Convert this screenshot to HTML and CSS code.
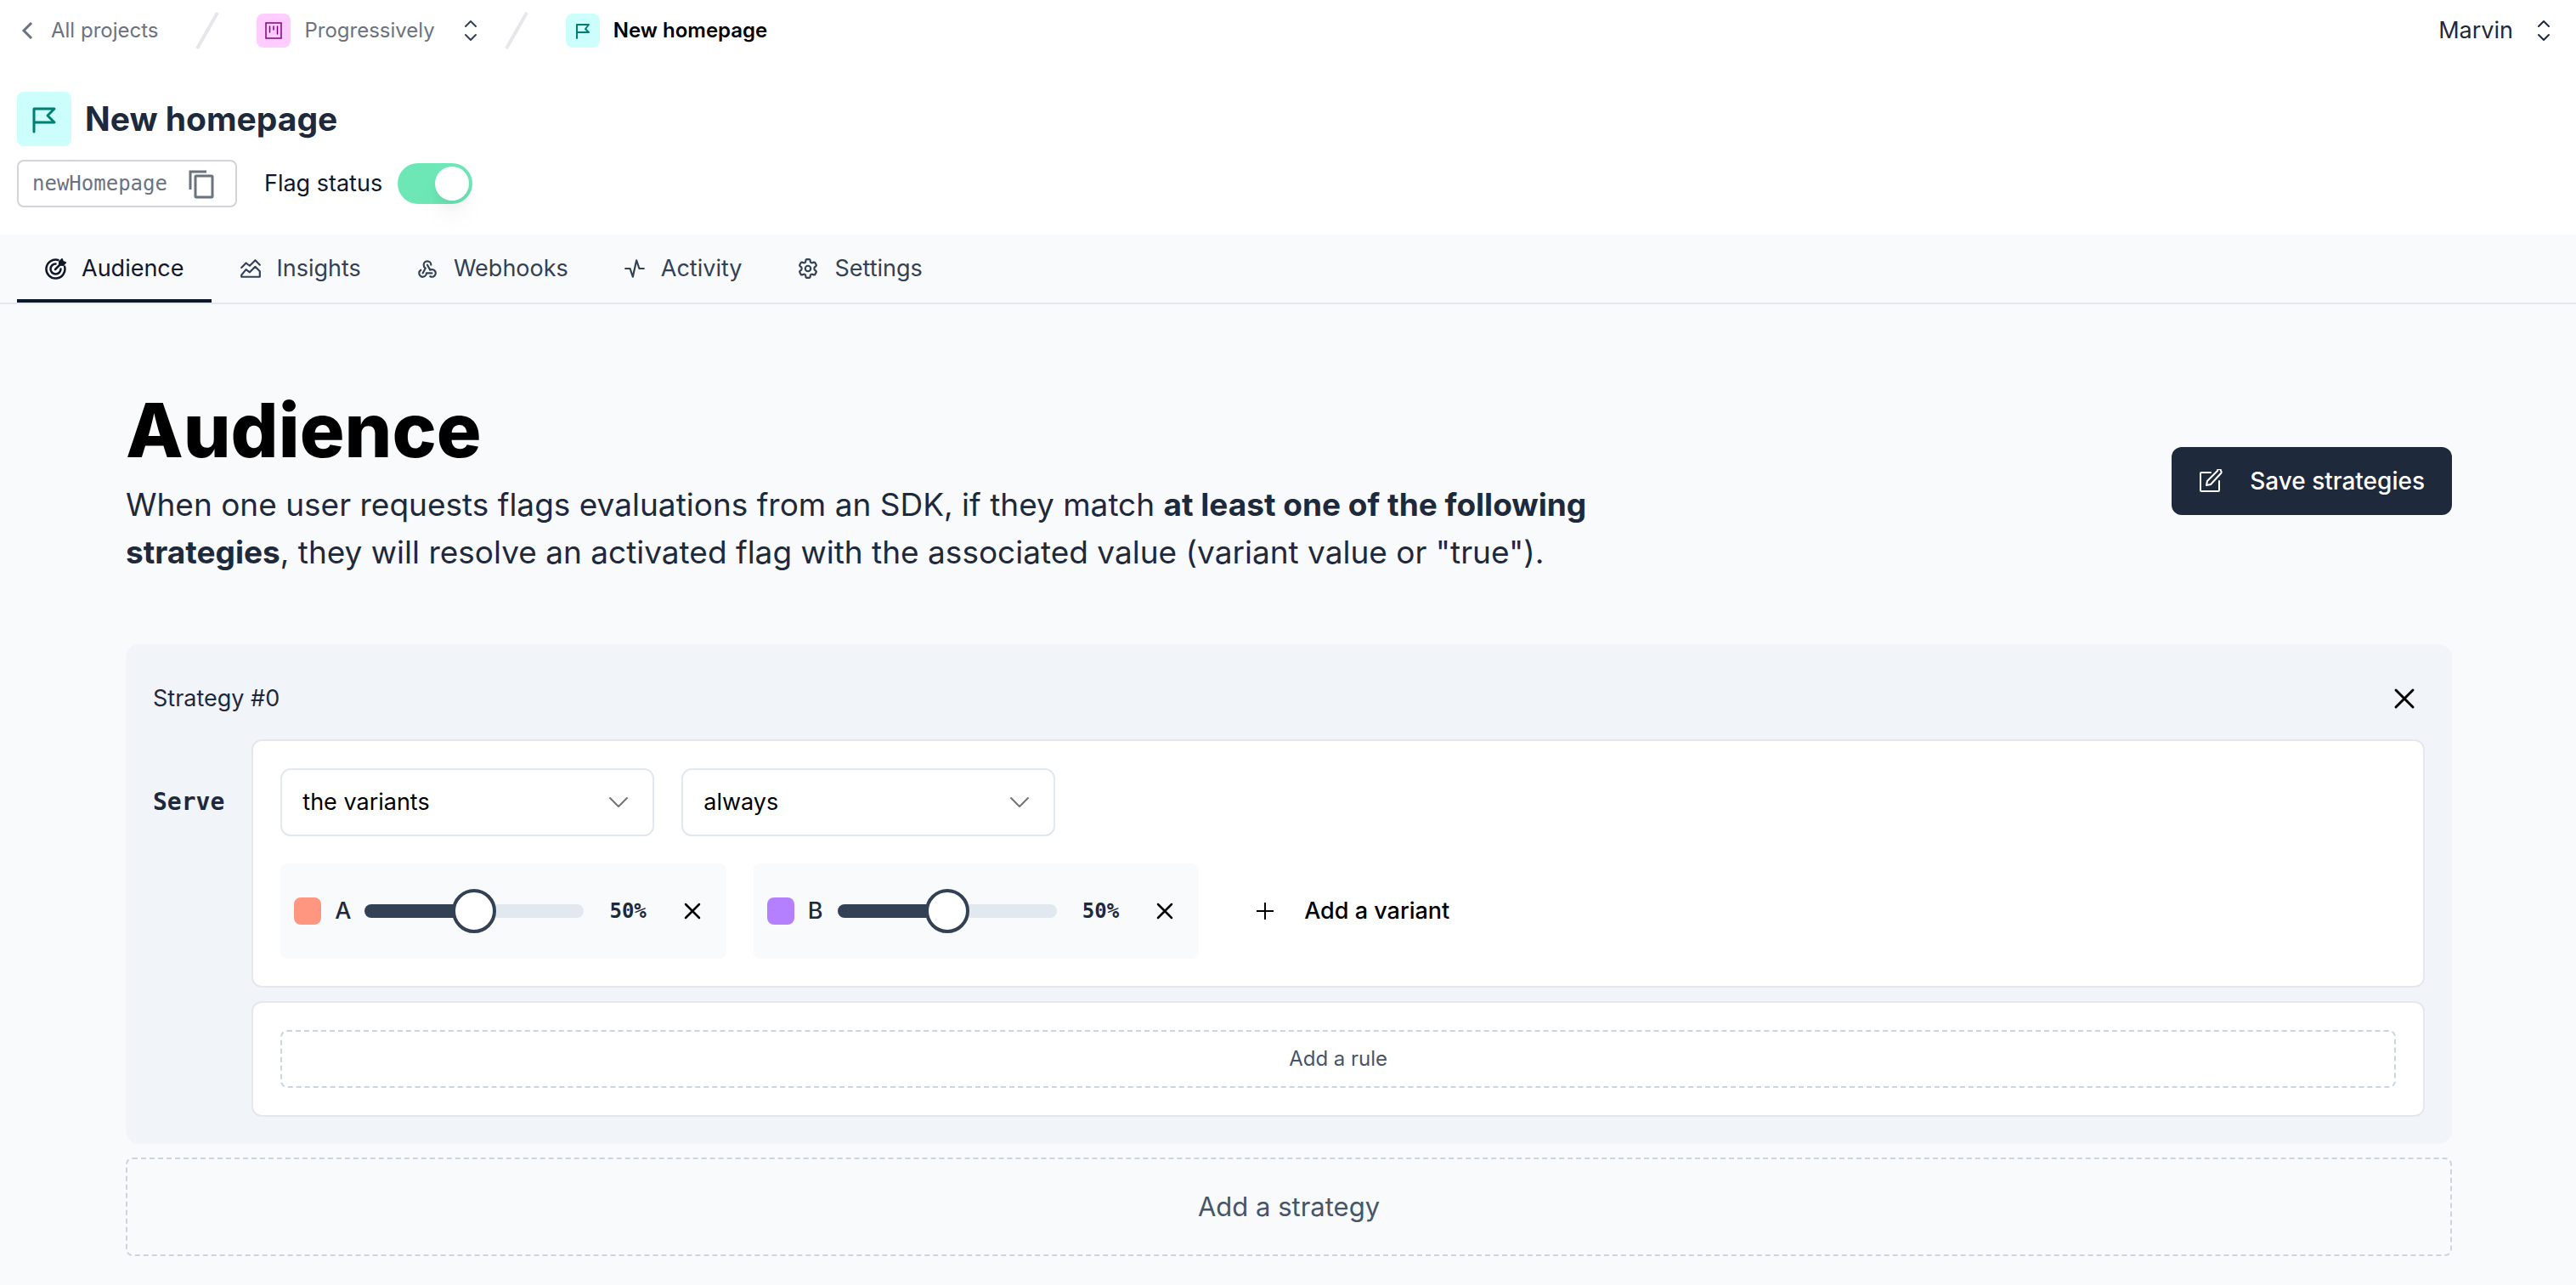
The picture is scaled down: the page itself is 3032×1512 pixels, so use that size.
FILE: index.html
```html
<!DOCTYPE html>
<html lang="en">
<head>
<meta charset="utf-8">
<meta name="viewport" content="width=device-width, initial-scale=1">
<title>Progressively | New homepage | Audience</title>
<link rel="stylesheet" href="styles.css">
</head>
<body>
<header class="topbar">
  <nav class="crumbs" aria-label="Breadcrumb">
    <a class="crumb crumb-back" href="#">
      <svg class="icon-20" viewBox="0 0 20 20" fill="none" stroke="currentColor" stroke-width="3" aria-hidden="true"><path d="M17 1 8 10l9 9"/></svg>
      All projects
    </a>
    <svg class="slash" viewBox="0 0 32 48" stroke="currentColor" stroke-width="4" aria-hidden="true"><path d="M4 45 28 3"/></svg>
    <div class="crumb-group">
      <a class="crumb" href="#">
        <span class="badge badge-pink">
          <svg class="icon-24" viewBox="0 0 24 24" fill="none" stroke="currentColor" aria-hidden="true"><rect x="3" y="3" width="18" height="18" stroke-width="1.500"/><path d="M7.500 7v7M12 7v4M16.500 7v9" stroke-width="1.500" stroke-linecap="round"/></svg>
        </span>
        Progressively
      </a>
      <button class="plain switcher" type="button" aria-label="Switch project">
        <svg class="icon-28" viewBox="0 0 28 28" fill="none" stroke="currentColor" stroke-width="2" stroke-linecap="round" stroke-linejoin="round" aria-hidden="true"><path d="m8 9 6-6 6 6M8 19l6 6 6-6"/></svg>
      </button>
    </div>
    <svg class="slash" viewBox="0 0 32 48" stroke="currentColor" stroke-width="4" aria-hidden="true"><path d="M4 45 28 3"/></svg>
    <a class="crumb crumb-current" href="#" aria-current="page">
      <span class="badge badge-teal">
        <svg class="icon-24" viewBox="0 0 24 24" fill="none" stroke="currentColor" stroke-width="2" stroke-linejoin="round" stroke-linecap="round" aria-hidden="true"><path d="M5 21V5h14l-4 5 4 4H5"/></svg>
      </span>
      New homepage
    </a>
  </nav>
  <button class="plain user" type="button">
    Marvin
    <svg class="icon-28" viewBox="0 0 28 28" fill="none" stroke="currentColor" stroke-width="2" stroke-linecap="round" stroke-linejoin="round" aria-hidden="true"><path d="m8 9 6-6 6 6M8 19l6 6 6-6"/></svg>
  </button>
</header>

<section class="flag-head">
  <div class="flag-title">
    <span class="badge badge-teal badge-large">
      <svg class="icon-40" viewBox="0 0 40 40" fill="none" stroke="currentColor" stroke-width="3" stroke-linejoin="round" stroke-linecap="round" aria-hidden="true"><path d="M8 35V8h24l-8 8 8 8H8"/></svg>
    </span>
    <h2>New homepage</h2>
  </div>
  <div class="flag-meta">
    <button class="flag-key" type="button">
      newHomepage
      <svg class="icon-36" viewBox="0 0 36 36" fill="none" stroke="currentColor" stroke-width="3" aria-hidden="true"><path d="M5 25V4h19"/><rect x="11" y="9" width="20" height="25" rx="1"/></svg>
    </button>
    <label class="status" for="flag-status">Flag status
      <input class="toggle" id="flag-status" type="checkbox" role="switch" checked>
    </label>
  </div>
</section>

<nav class="tabs" aria-label="Flag sections">
  <a class="tab tab-active" href="#" aria-current="page">
    <svg class="icon-26" viewBox="0 0 26 26" fill="none" stroke="currentColor" stroke-width="2.500" stroke-linecap="round" stroke-linejoin="round" aria-hidden="true"><path d="M16.500 3A11 11 0 1 0 24 10.500"/><path d="M13.500 7.500A6 6 0 1 0 19.500 13.500"/><path d="m13 14 6-6"/><path fill="currentColor" stroke-width="2" d="M18 8.500V5l3-3 1 3 3 1-3 3z"/></svg>
    Audience
  </a>
  <a class="tab" href="#">
    <svg class="icon-26" viewBox="0 0 24 24" fill="none" stroke="currentColor" stroke-width="2" stroke-linecap="round" stroke-linejoin="round" aria-hidden="true"><path d="m2 11 5-5 4 3 6-6 5 5"/><path d="M2 21v-2l5-6 4 3 6-6 5 5v6z"/></svg>
    Insights
  </a>
  <a class="tab" href="#">
    <svg class="icon-26" viewBox="0 0 24 24" fill="none" stroke="currentColor" stroke-width="2" stroke-linecap="round" stroke-linejoin="round" aria-hidden="true"><path d="M4.876 13.610A4 4 0 1 0 11 17h6"/><path d="M15.066 20.502A4 4 0 1 0 17 13c-.706 0-1.424.179-2 .5L12 8"/><path d="M16 8a4 4 0 1 0-8 0c0 1.506.77 2.818 2 3.500L7 17"/></svg>
    Webhooks
  </a>
  <a class="tab" href="#">
    <svg class="icon-26" viewBox="0 0 24 24" fill="none" stroke="currentColor" stroke-width="2" stroke-linecap="round" stroke-linejoin="round" aria-hidden="true"><path d="M2 12h5l3 9 4-18 3 9h5"/></svg>
    Activity
  </a>
  <a class="tab" href="#">
    <svg class="icon-26" viewBox="0 0 24 24" fill="none" stroke="currentColor" stroke-width="2" stroke-linecap="round" stroke-linejoin="round" aria-hidden="true"><path d="M9.594 2.940c.09-.542.56-.94 1.110-.94h2.593c.55 0 1.020.398 1.110.94l.213 1.781c.063.374.313.686.645.87.074.04.147.083.22.127.325.196.72.257 1.075.124l1.717-.656a1.125 1.125 0 0 1 1.370.49l1.296 2.247a1.125 1.125 0 0 1-.26 1.431l-1.403 1.127c-.293.241-.438.613-.43.992a7.723 7.723 0 0 1 0 1.055c-.008.378.137.75.43.991l1.404 1.127c.424.35.534.955.26 1.430l-1.298 2.247a1.125 1.125 0 0 1-1.369.491l-1.717-.656c-.355-.133-.75-.072-1.076.124a6.470 6.470 0 0 1-.22.128c-.331.183-.581.495-.644.869l-.213 1.781c-.09.543-.56.94-1.110.94h-2.594c-.55 0-1.019-.398-1.110-.94l-.213-1.781c-.062-.374-.312-.686-.644-.87a6.520 6.520 0 0 1-.22-.127c-.325-.196-.72-.257-1.076-.124l-1.717.656a1.125 1.125 0 0 1-1.369-.49l-1.297-2.247a1.125 1.125 0 0 1 .26-1.431l1.404-1.127c.292-.24.437-.613.43-.991a6.932 6.932 0 0 1 0-1.055c.007-.38-.138-.751-.43-.992l-1.404-1.127a1.125 1.125 0 0 1-.26-1.430l1.297-2.247a1.125 1.125 0 0 1 1.370-.491l1.716.656c.356.133.751.072 1.076-.124.072-.044.146-.086.22-.128.332-.183.582-.495.644-.869z"/><circle cx="12" cy="12" r="3"/></svg>
    Settings
  </a>
</nav>

<main class="content">
  <div class="hero">
    <div class="hero-text">
      <h1>Audience</h1>
      <p>When one user requests flags evaluations from an SDK, if they match <strong>at least one of the following strategies</strong>, they will resolve an activated flag with the associated value (variant value or "true").</p>
    </div>
    <button class="save" type="submit">
      <svg class="icon-28" viewBox="0 0 28 28" fill="none" stroke="currentColor" stroke-width="2" stroke-linecap="round" stroke-linejoin="round" aria-hidden="true"><path d="M14 4H3a1 1 0 0 0-1 1v20a1 1 0 0 0 1 1h20a1 1 0 0 0 1-1V14"/><path d="m9 19 1-5L22 2a2 2 0 0 1 4 0 2 2 0 0 1 0 3L14 18z"/></svg>
      Save strategies
    </button>
  </div>

  <section class="strategy">
    <div class="strategy-head">
      <h3>Strategy #0</h3>
      <button class="plain close" type="button" aria-label="Remove strategy">
        <svg class="icon-28" viewBox="0 0 28 28" fill="none" stroke="currentColor" stroke-width="3" stroke-linecap="round" aria-hidden="true"><path d="m4 4 20 20M24 4 4 24"/></svg>
      </button>
    </div>
    <div class="strategy-body">
      <span class="serve">Serve</span>
      <div class="panels">
        <div class="panel panel-serve">
          <div class="row">
            <div class="select">
              <select aria-label="Value to serve"><option>the variants</option><option>a boolean</option></select>
              <svg class="icon-28" viewBox="0 0 28 28" fill="none" stroke="currentColor" stroke-width="2" stroke-linecap="round" stroke-linejoin="round" aria-hidden="true"><path d="m4 9 10 10L24 9"/></svg>
            </div>
            <div class="select">
              <select aria-label="When to serve"><option>always</option><option>between dates</option></select>
              <svg class="icon-28" viewBox="0 0 28 28" fill="none" stroke="currentColor" stroke-width="2" stroke-linecap="round" stroke-linejoin="round" aria-hidden="true"><path d="m4 9 10 10L24 9"/></svg>
            </div>
          </div>
          <div class="row">
            <div class="variant">
              <span class="swatch swatch-coral"></span>
              <label for="variant-a">A</label>
              <input class="slider" id="variant-a" type="range" min="0" max="100" value="50" style="--value: 50%">
              <output for="variant-a">50%</output>
              <button class="plain remove" type="button" aria-label="Remove variant A">
                <svg class="icon-24" viewBox="0 0 24 24" fill="none" stroke="currentColor" stroke-width="2.500" stroke-linecap="round" aria-hidden="true"><path d="m4 4 16 16M20 4 4 20"/></svg>
              </button>
            </div>
            <div class="variant">
              <span class="swatch swatch-violet"></span>
              <label for="variant-b">B</label>
              <input class="slider" id="variant-b" type="range" min="0" max="100" value="50" style="--value: 50%">
              <output for="variant-b">50%</output>
              <button class="plain remove" type="button" aria-label="Remove variant B">
                <svg class="icon-24" viewBox="0 0 24 24" fill="none" stroke="currentColor" stroke-width="2.500" stroke-linecap="round" aria-hidden="true"><path d="m4 4 16 16M20 4 4 20"/></svg>
              </button>
            </div>
            <button class="plain add-variant" type="button">
              <svg class="icon-28" viewBox="0 0 28 28" fill="none" stroke="currentColor" stroke-width="2" aria-hidden="true"><path d="M14 4v20M4 14h20"/></svg>
              Add a variant
            </button>
          </div>
        </div>
        <div class="panel">
          <button class="dashed add-rule" type="button">Add a rule</button>
        </div>
      </div>
    </div>
  </section>
  <button class="dashed add-strategy" type="button">Add a strategy</button>
</main>
</body>
</html>
```
FILE: styles.css
```css
*,
*::before,
*::after {
  box-sizing: border-box;
}

body {
  margin: 0;
  background: #f9fafc;
  color: #1e293b;
  font-family: Inter, "Liberation Sans", sans-serif;
  font-size: 27px;
  line-height: 40px;
}

h1, h2, h3, p {
  margin: 0;
}

a {
  color: inherit;
  text-decoration: none;
}

button, select {
  font: inherit;
  color: inherit;
  cursor: pointer;
}

svg {
  display: block;
  flex: none;
}

.icon-20 { width: 20px; height: 20px; }
.icon-24 { width: 24px; height: 24px; }
.icon-26 { width: 26px; height: 26px; }
.icon-28 { width: 28px; height: 28px; }
.icon-36 { width: 36px; height: 36px; }
.icon-40 { width: 40px; height: 40px; }

.plain {
  padding: 0;
  border: 0;
  background: none;
}

/* Top bar */
.topbar {
  display: flex;
  align-items: center;
  justify-content: space-between;
  height: 72px;
  padding: 0 24px 0 20px;
  background: #fff;
}

.crumbs,
.crumb,
.crumb-group,
.user {
  display: flex;
  align-items: center;
}

.crumbs {
  gap: 24px;
  color: #6b7280;
  font-size: 24px;
}

.crumb {
  gap: 16px;
}

.crumb-back {
  gap: 20px;
  padding-right: 18px;
}

.crumb-group {
  gap: 28px;
}

.crumb-current {
  color: #000;
  font-weight: 600;
}

.slash {
  width: 32px;
  height: 48px;
  margin-right: 18px;
  color: #e5e7eb;
}

.switcher {
  color: #334155;
}

.user {
  gap: 22px;
}

.badge {
  display: grid;
  place-items: center;
  flex: none;
  width: 40px;
  height: 40px;
  border-radius: 8px;
}

.badge-large {
  width: 64px;
  height: 64px;
}

.badge-pink {
  background: #ffccff;
  color: #800080;
}

.badge-teal {
  background: #ccfffc;
  color: #008073;
}

/* Flag heading */
.flag-head {
  display: grid;
  gap: 16px;
  padding: 36px 20px 32px;
  background: #fff;
}

.flag-title,
.flag-meta,
.flag-key,
.status {
  display: flex;
  align-items: center;
}

.flag-title {
  gap: 16px;
}

.flag-title h2 {
  font-size: 39px;
  font-weight: 700;
  line-height: 48px;
}

.flag-meta {
  gap: 32px;
}

.flag-key {
  gap: 22px;
  height: 56px;
  padding: 0 22px 0 16px;
  border: 2px solid #d1d5db;
  border-radius: 8px;
  background: #fff;
  color: #6b7280;
  font-family: "DejaVu Sans Mono", monospace;
  font-size: 24px;
}

.status {
  gap: 18px;
  color: #0f172a;
}

.toggle {
  appearance: none;
  display: flex;
  width: 88px;
  height: 48px;
  margin: 0;
  padding: 4px;
  border-radius: 24px;
  background: #cbd5e1;
}

.toggle::before {
  content: "";
  width: 40px;
  height: 40px;
  border-radius: 50%;
  background: #fff;
  box-shadow: 0 20px 30px rgba(0, 0, 0, .04), 0 8px 12px rgba(0, 0, 0, .04);
}

.toggle:checked {
  justify-content: flex-end;
  background: #6ee7b7;
}

/* Tabs */
.tabs {
  display: flex;
  gap: 1px;
  padding: 0 20px;
  border-bottom: 2px solid #e2e8f0;
}

.tab {
  display: flex;
  align-items: center;
  gap: 18px;
  height: 80px;
  padding: 4px 32px 0;
  border-bottom: 4px solid transparent;
  color: #334155;
}

.tab-active {
  border-color: #0f172a;
  color: #0f172a;
}

/* Page content */
.content {
  display: flex;
  flex-direction: column;
  padding: 96px 146px 34px 148px;
}

.hero {
  display: flex;
  align-items: center;
  justify-content: space-between;
  gap: 64px;
  margin-bottom: 80px;
}

.hero-text {
  display: grid;
  gap: 8px;
  max-width: 1792px;
}

.hero h1 {
  color: #000;
  font-size: 88px;
  font-weight: 800;
  line-height: 104px;
}

.hero p {
  font-size: 37px;
  line-height: 56px;
}

.hero strong {
  font-weight: 700;
}

.save {
  display: flex;
  align-items: center;
  flex: none;
  gap: 32px;
  height: 80px;
  padding: 0 32px;
  border: 0;
  border-radius: 12px;
  background: #1e293b;
  color: #fff;
  font-size: 28px;
  font-weight: 500;
}

/* Strategy card */
.strategy {
  padding: 32px;
  border-radius: 16px;
  background: #f1f4f9;
}

.strategy-head {
  display: flex;
  align-items: center;
  justify-content: space-between;
  height: 64px;
  margin-bottom: 16px;
}

.strategy-head h3 {
  font-size: 27px;
  font-weight: 400;
}

.close {
  padding: 10px;
  color: #000;
}

.strategy-body {
  display: flex;
  gap: 32px;
}

.serve {
  padding-top: 54px;
  font-family: "DejaVu Sans Mono", monospace;
  font-size: 28px;
  font-weight: 700;
}

.panels {
  display: grid;
  flex: 1;
  gap: 16px;
}

.panel {
  padding: 32px;
  border: 2px solid #e5e7eb;
  border-radius: 12px;
  background: #fff;
}

.panel-serve {
  display: grid;
  gap: 32px;
}

.row {
  display: flex;
  align-items: center;
  gap: 32px;
}

.select {
  display: grid;
  align-items: center;
  width: 440px;
}

.select > * {
  grid-area: 1 / 1;
}

.select svg {
  justify-self: end;
  margin-right: 28px;
  color: #737373;
  pointer-events: none;
}

select {
  appearance: none;
  width: 100%;
  height: 80px;
  padding: 0 64px 0 24px;
  border: 2px solid #e2e8f0;
  border-radius: 12px;
  background: #fff;
  color: #000;
}

.variant {
  display: flex;
  align-items: center;
  gap: 16px;
  height: 112px;
  padding: 0 16px;
  border-radius: 8px;
  background: #f9fafc;
}

.variant label {
  min-width: 19px;
  font-weight: 500;
}

.swatch {
  width: 32px;
  height: 32px;
  border-radius: 8px;
}

.swatch-coral { background: #ff9680; }
.swatch-violet { background: #b580ff; }

.slider {
  appearance: none;
  width: 258px;
  height: 16px;
  margin: 0;
  border-radius: 8px;
  background: linear-gradient(to right, #334155 var(--value), #e2e8f0 var(--value));
}

.slider::-webkit-slider-thumb {
  appearance: none;
  width: 52px;
  height: 52px;
  border: 4px solid #334155;
  border-radius: 50%;
  background: #fff;
}

.variant output {
  padding: 0 14px;
  font-family: "DejaVu Sans Mono", monospace;
  font-size: 24px;
  font-weight: 700;
}

.remove {
  padding: 12px;
  color: #000;
}

.add-variant {
  display: flex;
  align-items: center;
  gap: 32px;
  padding: 0 32px;
  color: #000;
  font-weight: 500;
}

.dashed {
  display: block;
  width: 100%;
  border: 2px dashed #cbd5e1;
  border-radius: 8px;
  background: none;
  color: #475569;
}

.add-rule {
  height: 68px;
  font-size: 24px;
}

.add-strategy {
  height: 116px;
  margin-top: 16px;
  font-size: 31px;
}
```
